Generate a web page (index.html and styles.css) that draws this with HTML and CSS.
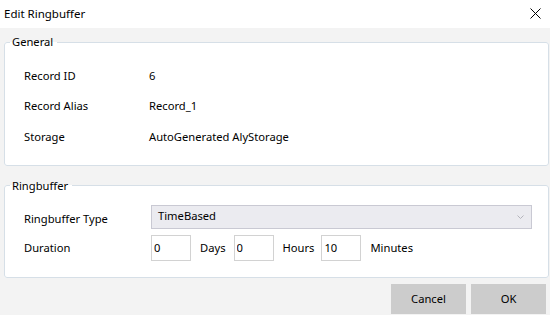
FILE: index.html
```html
<!DOCTYPE html>
<html lang="en">

<head>
    <meta charset="UTF-8">
    <meta name="viewport" content="width=device-width, initial-scale=1.0">
    <title>Edit Ringbuffer</title>
    <link rel="stylesheet" href="styles.css">
</head>

<body>
    <div class="dialog">
        <div class="titlebar">
            <span class="title">Edit Ringbuffer</span>
            <svg class="close" width="11" height="11" viewBox="0 0 11 11">
                <path d="M0.5 0.5 L10.5 10.5 M10.5 0.5 L0.5 10.5" stroke="#000" stroke-width="1" fill="none" />
            </svg>
        </div>

        <fieldset class="group general">
            <legend>General</legend>
            <div class="fields">
                <span class="label">Record ID</span>
                <span class="value">6</span>
                <span class="label">Record Alias</span>
                <span class="value">Record_1</span>
                <span class="label">Storage</span>
                <span class="value">AutoGenerated AlyStorage</span>
            </div>
        </fieldset>

        <fieldset class="group ringbuffer">
            <legend>Ringbuffer</legend>
            <div class="fields">
                <span class="label">Ringbuffer Type</span>
                <div class="combo">
                    <span>TimeBased</span>
                    <svg class="chevron" width="7" height="4" viewBox="0 0 7 4">
                        <path d="M0.5 0.5 L3.5 3.5 L6.5 0.5" stroke="#b4b4bc" stroke-width="1" fill="none" />
                    </svg>
                </div>
                <span class="label">Duration</span>
                <div class="duration">
                    <input type="text" class="num" value="0">
                    <span class="unit">Days</span>
                    <input type="text" class="num" value="0">
                    <span class="unit">Hours</span>
                    <input type="text" class="num" value="10">
                    <span class="unit">Minutes</span>
                </div>
            </div>
        </fieldset>

        <div class="buttons">
            <button type="button" class="btn">Cancel</button>
            <button type="button" class="btn">OK</button>
        </div>
    </div>
</body>

</html>
```

FILE: styles.css
```css
*,
::before,
::after {
    box-sizing: border-box;
    font-family: "Noto Sans", "Open Sans", sans-serif;
}

body {
    margin: unset;
    width: 550px;
    height: 315px;
    background-color: #f3f3f3;
    font-size: 11.2px;
    color: #000;
    overflow: hidden;
}

.dialog {
    display: flex;
    flex-direction: column;
    height: 100%;
}

.titlebar {
    background-color: #fff;
    height: 28px;
    display: flex;
    justify-content: space-between;
    align-items: center;
    padding: 0 9px 1px 4px;
    font-size: 11.5px;
}

.close {
    margin-top: -1px;
}

.group {
    margin: 6px 1px 0 4px;
    padding: 0;
    border: 1px solid #d6dfe7;
    border-radius: 3px;
    background-color: #fff;
    min-width: 0;
}

.group legend {
    margin-left: 5px;
    padding: 0 4px 0 2px;
    line-height: 16px;
}

.general .fields {
    display: grid;
    grid-template-columns: 125px 1fr;
    grid-auto-rows: 30.5px;
    align-items: center;
    padding: 10px 0 13px 19px;
}

.ringbuffer {
    margin-top: 12px;
}

.ringbuffer .fields {
    display: grid;
    grid-template-columns: 127px 1fr;
    grid-template-rows: 24px 26px;
    row-gap: 6px;
    align-items: center;
    padding: 11px 16px 16px 19px;
}

.ringbuffer .label:first-child {
    margin-top: 3px;
}

.combo {
    height: 24px;
    background-color: #ebebf0;
    border: 1px solid #c9c9d3;
    display: flex;
    justify-content: space-between;
    align-items: center;
    padding: 0 7px 0 6px;
}

.combo span {
    margin-top: -2px;
}

.duration {
    display: flex;
    align-items: center;
}

.num {
    width: 40px;
    height: 26px;
    border: 1px solid #d2d2d2;
    background-color: #fff;
    padding: 0 0 0 2px;
    font-size: 11.2px;
    color: #000;
    outline: none;
}

.unit {
    margin: 0 8px 0 9px;
}

.unit:nth-of-type(2) {
    margin-right: 7px;
}

.buttons {
    display: flex;
    justify-content: flex-end;
    gap: 5px;
    padding: 6px 4px 0 0;
}

.btn {
    width: 75px;
    height: 30px;
    border: none;
    background-color: #cccccc;
    font-size: 11.2px;
    color: #000;
    padding: 0;
}
```
